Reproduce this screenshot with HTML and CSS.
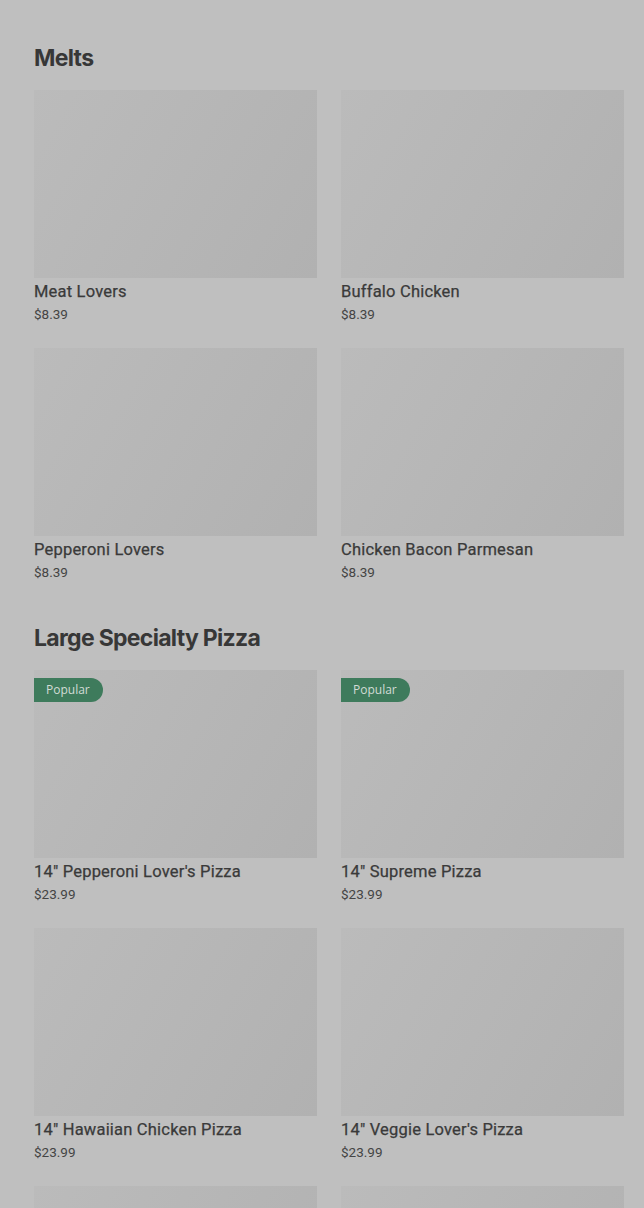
FILE: index.html
```html
<!DOCTYPE html>
<html lang="en">
<head>
<meta charset="utf-8">
<title>Menu</title>
<link rel="stylesheet" href="styles.css">
</head>
<body>
<main class="menu">
  <section class="section">
    <h2 class="section-title">Melts</h2>
    <div class="grid">
      <div class="card"><div class="thumb"></div><div class="name">Meat Lovers</div><div class="price">$8.39</div></div>
      <div class="card"><div class="thumb"></div><div class="name">Buffalo Chicken</div><div class="price">$8.39</div></div>
      <div class="card"><div class="thumb"></div><div class="name">Pepperoni Lovers</div><div class="price">$8.39</div></div>
      <div class="card"><div class="thumb"></div><div class="name">Chicken Bacon Parmesan</div><div class="price">$8.39</div></div>
    </div>
  </section>
  <section class="section">
    <h2 class="section-title">Large Specialty Pizza</h2>
    <div class="grid">
      <div class="card"><div class="thumb"><span class="badge">Popular</span></div><div class="name">14" Pepperoni Lover's Pizza</div><div class="price">$23.99</div></div>
      <div class="card"><div class="thumb"><span class="badge">Popular</span></div><div class="name">14" Supreme Pizza</div><div class="price">$23.99</div></div>
      <div class="card"><div class="thumb"></div><div class="name">14" Hawaiian Chicken Pizza</div><div class="price">$23.99</div></div>
      <div class="card"><div class="thumb"></div><div class="name">14" Veggie Lover's Pizza</div><div class="price">$23.99</div></div>
      <div class="card"><div class="thumb"></div></div>
      <div class="card"><div class="thumb"></div></div>
    </div>
  </section>
</main>
</body>
</html>
```
FILE: styles.css
```css
html, body {
  margin: 0;
  padding: 0;
  background: #bfbfbf;
  overflow: hidden;
}
body {
  font-family: "Liberation Sans", Arial, sans-serif;
  color: #3a3a3a;
}
.menu {
  padding: 0 20px 0 34px;
}
.section {
  padding-top: 42px;
}
.section:first-child {
  padding-top: 44px;
}
.section-title {
  margin: 0 0 18px;
  font-family: Inter, "Liberation Sans", sans-serif;
  font-size: 23px;
  line-height: 28px;
  font-weight: 700;
  letter-spacing: -0.7px;
  color: #373737;
}
.grid {
  display: grid;
  grid-template-columns: 283px 283px;
  column-gap: 24px;
  row-gap: 24px;
}
.card {
  height: 234px;
}
.thumb {
  position: relative;
  height: 188px;
  background: linear-gradient(120deg, #bbbbbb 0%, #b6b6b6 50%, #b1b1b1 100%);
}
.badge {
  position: absolute;
  left: 0;
  top: 8px;
  height: 24px;
  line-height: 24px;
  padding: 0 13px 0 12px;
  background: #3e7b5c;
  color: #d2dcd6;
  font-family: "Open Sans", "Liberation Sans", sans-serif;
  font-size: 12px;
  border-radius: 0 12px 12px 0;
}
.name {
  margin-top: 4px;
  font-family: Roboto, "Liberation Sans", sans-serif;
  font-size: 16.5px;
  line-height: 20px;
  font-weight: 400;
  letter-spacing: 0.2px;
  color: #3a3a3a;
  -webkit-text-stroke: 0.25px #3a3a3a;
}
.price {
  margin-top: 3px;
  font-family: Roboto, "Liberation Sans", sans-serif;
  font-size: 13.5px;
  line-height: 18px;
  color: #444444;
}
```
